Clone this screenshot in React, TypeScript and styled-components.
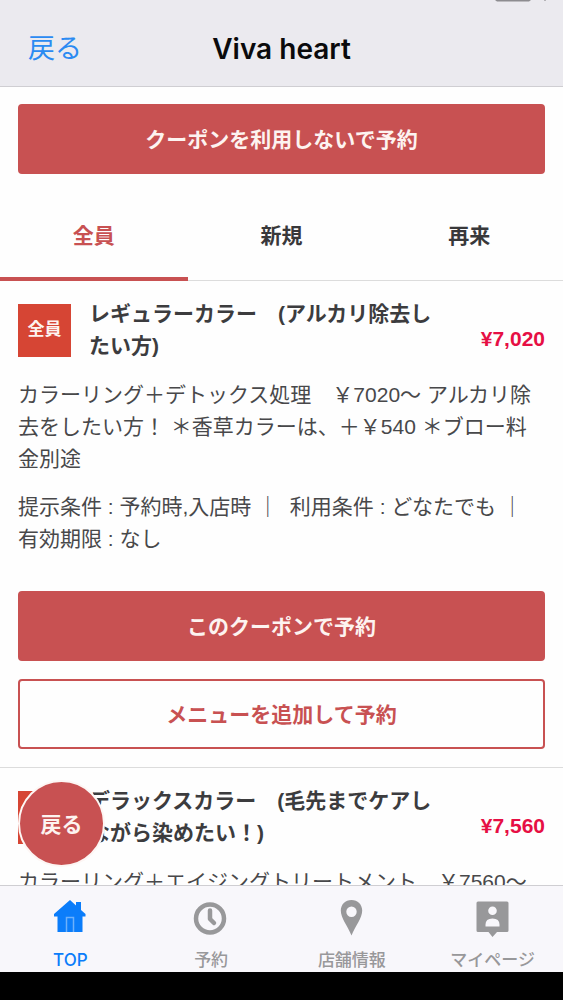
import React from "react";
import styled, { createGlobalStyle } from "styled-components";

const RED = "#c85152";

const GlobalStyle = createGlobalStyle`
  *, *::before, *::after { box-sizing: border-box; }
  body {
    margin: 0;
    background: #000;
    color: #3c3c3e;
    font-family: "Liberation Sans", "Noto Sans CJK JP", sans-serif;
    font-size: 21px;
    line-height: 32px;
  }
  button { font-family: inherit; cursor: pointer; }
  h1, h2, p { margin: 0; }
`;

const Screen = styled.div`
  display: flex;
  flex-direction: column;
  height: 100vh;
  padding-bottom: 28px;
`;

const Header = styled.header`
  position: relative;
  flex: none;
  display: grid;
  grid-template-columns: 1fr auto 1fr;
  align-items: center;
  height: 87px;
  padding: 12px 28px 0;
  background: #ebeaef;
  border-bottom: 1px solid #cfced2;
`;

const Battery = styled.svg`
  position: absolute;
  top: 0;
  right: 16px;
`;

const HeaderBack = styled.button`
  justify-self: start;
  padding: 0;
  border: 0;
  background: none;
  color: #2b8bf2;
  font-size: 27px;
  line-height: 40px;
`;

const Title = styled.h1`
  color: #0a0a0c;
  font-family: Inter, sans-serif;
  font-size: 28px;
  font-weight: 600;
  line-height: 40px;
`;

const Main = styled.main`
  flex: 1;
  min-height: 0;
  overflow-y: auto;
  scrollbar-width: none;
  background: #fefefe;
`;

const ButtonStack = styled.div`
  display: flex;
  flex-direction: column;
  gap: 18px;
`;

const TopActions = styled(ButtonStack)`
  padding: 17px 18px 18px;
`;

const ActionButton = styled.button<{ $outline?: boolean }>`
  height: 70px;
  padding: 0 0 2px;
  border: 2px solid ${RED};
  border-radius: 4px;
  background: ${(p) => (p.$outline ? "#fefefe" : RED)};
  color: ${(p) => (p.$outline ? RED : "#fdf3f0")};
  font-size: 21px;
  font-weight: 700;
`;

const Tabs = styled.div`
  display: grid;
  grid-template-columns: repeat(3, 1fr);
  height: 89px;
`;

const Tab = styled.button<{ $active?: boolean }>`
  padding: 0 0 6px;
  border: 0;
  background: none;
  box-shadow: inset 0 ${(p) => (p.$active ? `-4px ${RED}` : "-1px #dcdcdc")};
  color: ${(p) => (p.$active ? RED : "#38383a")};
  font-size: 21px;
  font-weight: 700;
`;

const Coupon = styled.article`
  padding: 17px 18px 18px;
  border-bottom: 1px solid #dcdcdc;
`;

const CouponHead = styled.div`
  display: flex;
  align-items: center;
  gap: 18px;
`;

const Badge = styled.span`
  flex: none;
  width: 53px;
  height: 53px;
  background: #d64534;
  color: #fdf3f0;
  font-size: 17px;
  font-weight: 700;
  line-height: 51px;
  text-align: center;
`;

const CouponName = styled.h2`
  flex: 1;
  font-size: 21px;
  font-weight: 700;
`;

const Price = styled.strong`
  min-width: 88px;
  padding-top: 18px;
  color: #e60f44;
  text-align: right;
`;

const Paragraph = styled.p`
  margin-top: 17px;
  color: #48484a;
`;

const Conditions = styled(Paragraph)`
  margin-top: 16px;
  margin-bottom: 36px;
`;

const TabBar = styled.nav`
  position: relative;
  flex: none;
  display: grid;
  grid-template-columns: repeat(4, 1fr);
  height: 87px;
  background: #f8f7fb;
  border-top: 1px solid #cfced2;
`;

const TabLink = styled.a<{ $active?: boolean }>`
  display: flex;
  flex-direction: column;
  align-items: center;
  gap: 11px;
  padding-top: 13px;
  color: ${(p) => (p.$active ? "#0b7dfa" : "#98989a")};
  font-family: Inter, "Noto Sans CJK JP", sans-serif;
  font-size: 17px;
  font-weight: 500;
  line-height: 24px;
  text-decoration: none;
`;

const FloatingBack = styled.button`
  position: absolute;
  left: 18px;
  bottom: 105px;
  width: 87px;
  height: 87px;
  padding: 0 0 2px;
  border: 2px solid #fdf6f4;
  border-radius: 50%;
  background: ${RED};
  color: #fdf3f0;
  font-size: 21px;
  font-weight: 700;
`;

const HomeIcon = () => (
  <svg width="38" height="38" viewBox="0 0 38 38" fill="currentColor" aria-hidden="true">
    <path d="M19 1 L25 6.500 V3 H30 V11 L34.500 15 V17.500 H31.500 V33 H6.500 V17.500 H3 V15 Z" />
    <path d="M15.500 33 V18.500 H22.500 V33" fill="none" stroke="#6db1fb" strokeWidth="1.500" />
  </svg>
);

const ClockIcon = () => (
  <svg width="38" height="38" viewBox="0 0 38 38" fill="none" stroke="currentColor" aria-hidden="true">
    <circle cx="18" cy="19.500" r="14" strokeWidth="4.500" />
    <path d="M18 11.500 V20 L22 24" strokeWidth="4.500" strokeLinecap="round" strokeLinejoin="round" />
  </svg>
);

const PinIcon = () => (
  <svg width="38" height="38" viewBox="0 0 38 38" fill="currentColor" aria-hidden="true">
    <path
      fillRule="evenodd"
      d="M18.500 1 C12.300 1 7.800 5.600 7.800 11.600 C7.800 19 14.500 27 18.500 36.500 C22.500 27 29.200 19 29.200 11.600 C29.200 5.600 24.700 1 18.500 1 Z M18.500 7.500 A5.200 5.200 0 1 1 18.500 17.900 A5.200 5.200 0 1 1 18.500 7.500 Z"
    />
  </svg>
);

const ProfileIcon = () => (
  <svg width="38" height="38" viewBox="0 0 38 38" fill="currentColor" aria-hidden="true">
    <path
      fillRule="evenodd"
      d="M4 2.500 H33 Q34.500 2.500 34.500 4 V31.500 Q34.500 33 33 33 H23 L18.500 38 L14.500 33 H4 Q2.500 33 2.500 31.500 V4 Q2.500 2.500 4 2.500 Z M18.500 7.500 A4.300 4.300 0 1 0 18.500 16.100 A4.300 4.300 0 1 0 18.500 7.500 Z M11.500 27.500 H25.500 V25.500 Q25.500 19.500 18.500 19.500 Q11.500 19.500 11.500 25.500 Z"
    />
  </svg>
);

type CouponData = {
  name: string;
  price: string;
  description: string;
  bookable?: boolean;
};

const coupons: CouponData[] = [
  {
    name: "レギュラーカラー　(アルカリ除去したい方)",
    price: "¥7,020",
    description:
      "カラーリング＋デトックス処理　￥7020〜 アルカリ除去をしたい方！ ＊香草カラーは、＋￥540 ＊ブロー料金別途",
    bookable: true,
  },
  {
    name: "デラックスカラー　(毛先までケアしながら染めたい！)",
    price: "¥7,560",
    description: "カラーリング＋エイジングトリートメント　￥7560〜",
  },
];

const CouponCard = ({ name, price, description, bookable }: CouponData) => (
  <Coupon>
    <CouponHead>
      <Badge>全員</Badge>
      <CouponName>{name}</CouponName>
      <Price>{price}</Price>
    </CouponHead>
    <Paragraph>{description}</Paragraph>
    {bookable && (
      <>
        <Conditions>
          提示条件 : 予約時,入店時 ｜&nbsp; 利用条件 : どなたでも ｜&nbsp; 有効期限 : なし
        </Conditions>
        <ButtonStack>
          <ActionButton type="button">このクーポンで予約</ActionButton>
          <ActionButton type="button" $outline>メニューを追加して予約</ActionButton>
        </ButtonStack>
      </>
    )}
  </Coupon>
);

export default function App() {
  return (
    <Screen>
      <GlobalStyle />
      <Header>
        <Battery width="54" height="2" viewBox="0 0 54 2" aria-hidden="true">
          <path d="M2 0 H38 L36 1.500 H4 Z" fill="#8d8c90" />
          <rect x="51" width="2" height="1" fill="#b5b4b8" />
        </Battery>
        <HeaderBack type="button">戻る</HeaderBack>
        <Title>Viva heart</Title>
      </Header>
      <Main>
        <TopActions>
          <ActionButton type="button">クーポンを利用しないで予約</ActionButton>
        </TopActions>
        <Tabs role="tablist">
          <Tab type="button" role="tab" aria-selected="true" $active>全員</Tab>
          <Tab type="button" role="tab" aria-selected="false">新規</Tab>
          <Tab type="button" role="tab" aria-selected="false">再来</Tab>
        </Tabs>
        {coupons.map((coupon) => (
          <CouponCard key={coupon.name} {...coupon} />
        ))}
      </Main>
      <TabBar>
        <TabLink href="#top" $active>
          <HomeIcon />
          <span>TOP</span>
        </TabLink>
        <TabLink href="#reserve">
          <ClockIcon />
          <span>予約</span>
        </TabLink>
        <TabLink href="#shop">
          <PinIcon />
          <span>店舗情報</span>
        </TabLink>
        <TabLink href="#mypage">
          <ProfileIcon />
          <span>マイページ</span>
        </TabLink>
        <FloatingBack type="button">戻る</FloatingBack>
      </TabBar>
    </Screen>
  );
}
